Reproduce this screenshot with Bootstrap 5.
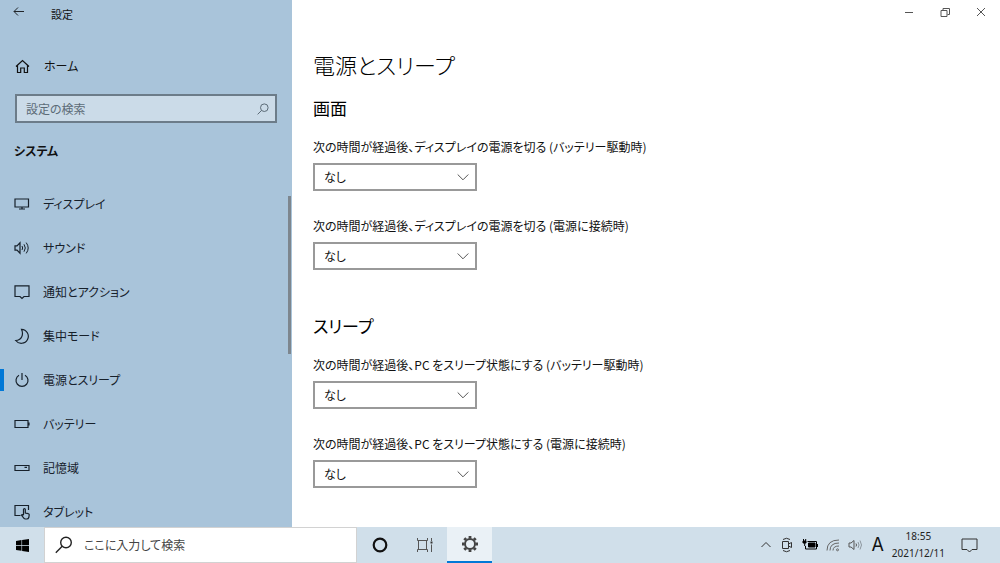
<!DOCTYPE html>
<html lang="ja">
<head>
<meta charset="utf-8">
<meta name="viewport" content="width=device-width, initial-scale=1">
<title>設定</title>
<link href="https://cdn.jsdelivr.net/npm/bootstrap@5.3.0/dist/css/bootstrap.min.css" rel="stylesheet">
<style>
  body { font-family: "Noto Sans CJK JP", sans-serif; font-feature-settings: "palt"; font-size: 12px; line-height: 20px; color: #111; background: #fff; }
  svg { display: block; flex: none; fill: none; stroke: currentColor; }
  a { color: inherit; }
  .sidebar { width: 292px; background: #a9c4da; }
  .titlebar { height: 28px; font-size: 11px; padding-left: 12px; gap: 26px; }
  .home-link { height: 36px; margin-top: 20px; padding-left: 15px; gap: 14px; }
  .find-box { margin: 10px 15px 0; height: 29px; border: 2px solid #6c7c89; background: #cbdbe8; color: #5c6b77; padding: 0 6px 0 9px; }
  .find-box input, .task-search input { border: 0; outline: 0; background: transparent; min-width: 0; padding: 0; font-feature-settings: inherit; }
  .find-box input::placeholder { color: #5c6b77; opacity: 1; }
  .group-title { font-size: 12px; line-height: 20px; margin: 18px 0 21px; padding-left: 14px; font-weight: 700; }
  .side-nav .nav-link { height: 44px; padding: 0 0 0 14px; gap: 13px; color: #16202a; font-size: 12px; }
  .side-nav .active::before { content: ""; position: absolute; left: 0; width: 4px; height: 22px; background: #0078d7; }
  .thumb { position: absolute; right: 1px; top: 196px; width: 3px; height: 158px; background: #7d868e; }
  .win-buttons { height: 24px; gap: 24px; padding-right: 13px; }
  .win-buttons .btn { color: #555; }
  .content-area { padding: 0 21px; }
  h1 { font-size: 22px; line-height: 36px; font-weight: 300; margin: 22px 0 12px; color: #000; }
  h2 { font-size: 17px; line-height: 28px; font-weight: 400; margin: 0 0 15px; color: #000; }
  .setting { margin-bottom: 25px; }
  .setting label { line-height: 20px; margin-bottom: 6px; }
  .group-gap { margin-top: 42px; }
  .setting .form-select { width: 164px; height: 28px; border: 2px solid #999; border-radius: 0; padding: 0 28px 0 9px; font-size: 12px; line-height: 20px; color: #111; font-feature-settings: inherit;
    background-image: url("data:image/svg+xml,%3Csvg xmlns='http://www.w3.org/2000/svg' viewBox='0 0 12 12'%3E%3Cpath d='M.7 3.5 6 8.8l5.300-5.300' fill='none' stroke='%23555'/%3E%3C/svg%3E"); background-size: 12px; background-position: right 6px center; }
  .taskbar { height: 36px; background: #d0dfea; color: #333; }
  .start { width: 44px; }
  .task-search { width: 313px; background: #fff; border: 1px solid #d2d2d2; padding-left: 10px; gap: 11px; color: #222; }
  .task-search input { font-size: 12px; }
  .task-search input::placeholder { color: #444; opacity: 1; }
  .task-btn { width: 45px; }
  .task-btn.current { background: #eaf1f6; border-bottom: 2px solid #0078d7 !important; }
  .tray { gap: 8px; padding-right: 22px; }
  .ime { font-family: Inter, sans-serif; font-size: 18px; line-height: 20px; color: #111; }
  .clock { font-family: "Noto Sans", sans-serif; font-size: 10px; line-height: 17px; color: #222; }
</style>
</head>
<body>
<div class="d-flex flex-column vh-100 overflow-hidden">
  <div class="d-flex flex-grow-1 overflow-hidden">
    <aside class="sidebar position-relative d-flex flex-column flex-shrink-0 overflow-hidden">
      <div class="titlebar d-flex align-items-center flex-shrink-0">
        <button class="btn p-0 border-0 pb-1" aria-label="戻る"><svg width="13" height="12" viewBox="0 0 13 12" stroke="#333"><path d="M2 5.500h10M6 1.500l-4 4 4 4"/></svg></button>
        <span>設定</span>
      </div>
      <a href="#" class="home-link d-flex align-items-center flex-shrink-0 text-decoration-none">
        <svg width="15" height="15" viewBox="0 0 15 15" stroke-width="1.200"><path d="M1 7.500 7.500 1.500 14 7.500M2.500 6.300v7.200h3.200V9h3.600v4.500h3.200V6.300"/></svg>
        <span>ホーム</span>
      </a>
      <div class="find-box d-flex align-items-center flex-shrink-0">
        <input type="text" class="flex-grow-1" placeholder="設定の検索" aria-label="設定の検索">
        <svg width="12" height="12" viewBox="0 0 12 12"><circle cx="7.300" cy="4.700" r="3.800"/><path d="M4.600 7.400.6 11.400"/></svg>
      </div>
      <p class="group-title">システム</p>
      <nav class="side-nav nav flex-column flex-nowrap">
        <a href="#" class="nav-link d-flex align-items-center"><svg width="16" height="16" viewBox="0 0 16 16" stroke-width="1.200"><path d="M1 3h13.500v8H1zM5 13h6M8 11v2"/></svg>ディスプレイ</a>
        <a href="#" class="nav-link d-flex align-items-center"><svg width="16" height="16" viewBox="0 0 16 16"><path stroke-width="1.200" d="M1 5.800h2L6 2.800v10.400L3 10.200H1z"/><path d="M8 6q1.300 2 0 4M10 4.300q2.600 3.700 0 7.400M12.200 2.600q4 5.400 0 10.800"/></svg>サウンド</a>
        <a href="#" class="nav-link d-flex align-items-center"><svg width="16" height="16" viewBox="0 0 16 16" stroke-width="1.200"><path d="M1 1.800h14v10.700h-5l-2 2-2-2H1z"/></svg>通知とアクション</a>
        <a href="#" class="nav-link d-flex align-items-center"><svg width="16" height="16" viewBox="0 0 16 16" stroke-width="1.200"><path d="M7.500 1.300a7 7 0 1 1-5.800 11.200C7.300 12.300 10 7 7.500 1.300z"/></svg>集中モード</a>
        <a href="#" class="nav-link active position-relative d-flex align-items-center" aria-current="page"><svg width="16" height="16" viewBox="0 0 16 16" stroke-width="1.200"><path d="M8 1v7M5 3.200a6 6 0 1 0 6 0"/></svg>電源とスリープ</a>
        <a href="#" class="nav-link d-flex align-items-center"><svg width="16" height="16" viewBox="0 0 16 16" stroke-width="1.200"><path d="M1 4.500h13v7H1zM15 6.500v3"/></svg>バッテリー</a>
        <a href="#" class="nav-link d-flex align-items-center"><svg width="16" height="16" viewBox="0 0 16 16" stroke-width="1.200"><path d="M1 5.500h14v5H1zM10.500 7.400H13"/></svg>記憶域</a>
        <a href="#" class="nav-link d-flex align-items-center"><svg width="16" height="16" viewBox="0 0 16 16" stroke-width="1.200"><path d="M6.500 11.500H1V1.500h13.500V6"/><path d="M9.500 11V5.500q0-1 .9-1t.9 1V9l3 .7q1 .3.900 1.300l-.4 2.500q-.5 1.500-2 1.500h-1.400q-1 0-1.600-.8L7.400 11q.8-1 2.100.3"/></svg>タブレット</a>
      </nav>
      <div class="thumb"></div>
    </aside>
    <div class="flex-grow-1">
      <div class="win-buttons d-flex justify-content-end align-items-center">
        <button class="btn p-0 border-0" aria-label="最小化"><svg width="12" height="12" viewBox="0 0 12 12"><path d="M2 6.500h8"/></svg></button>
        <button class="btn p-0 border-0" aria-label="元に戻す"><svg width="12" height="12" viewBox="0 0 12 12"><path d="M2 4.500h6v6H2zM4 4V2.500h6.500V8.500H8.500"/></svg></button>
        <button class="btn p-0 border-0" aria-label="閉じる"><svg width="12" height="12" viewBox="0 0 12 12"><path d="m2 2 8 8M10 2l-8 8"/></svg></button>
      </div>
      <main class="content-area">
        <h1>電源とスリープ</h1>
        <section>
          <h2>画面</h2>
          <div class="setting"><label class="d-block" for="screen-battery">次の時間が経過後、ディスプレイの電源を切る (バッテリー駆動時)</label>
            <select class="form-select" id="screen-battery"><option>なし</option></select></div>
          <div class="setting"><label class="d-block" for="screen-ac">次の時間が経過後、ディスプレイの電源を切る (電源に接続時)</label>
            <select class="form-select" id="screen-ac"><option>なし</option></select></div>
        </section>
        <section class="group-gap">
          <h2>スリープ</h2>
          <div class="setting"><label class="d-block" for="sleep-battery">次の時間が経過後、PC をスリープ状態にする (バッテリー駆動時)</label>
            <select class="form-select" id="sleep-battery"><option>なし</option></select></div>
          <div class="setting"><label class="d-block" for="sleep-ac">次の時間が経過後、PC をスリープ状態にする (電源に接続時)</label>
            <select class="form-select" id="sleep-ac"><option>なし</option></select></div>
        </section>
      </main>
    </div>
  </div>
  <footer class="taskbar d-flex align-items-stretch flex-shrink-0">
    <button class="start btn border-0 rounded-0 p-0 d-flex align-items-center justify-content-center" aria-label="スタート"><svg width="13" height="13" viewBox="0 0 13 13"><path fill="#000" stroke="none" d="M0 1.900 5.500 1.100V6H0zM6.100 1 13 0v6H6.100zM0 6.700h5.500v5.100L0 11zM6.100 6.700H13V13l-6.900-1z"/></svg></button>
    <div class="task-search d-flex align-items-center">
      <svg width="18" height="18" viewBox="0 0 18 18" stroke-width="1.400"><circle cx="11" cy="6.500" r="5.300"/><path d="M7.200 10.300.8 16.700"/></svg>
      <input type="text" class="flex-grow-1" placeholder="ここに入力して検索" aria-label="ここに入力して検索">
    </div>
    <button class="task-btn btn border-0 rounded-0 p-0 d-flex align-items-center justify-content-center" aria-label="Cortana"><svg width="16" height="16" viewBox="0 0 16 16"><circle cx="8" cy="8" r="6.300" stroke="#111" stroke-width="2.200"/></svg></button>
    <button class="task-btn btn border-0 rounded-0 p-0 d-flex align-items-center justify-content-center" aria-label="タスク ビュー"><svg width="16" height="16" viewBox="0 0 16 16"><path stroke="#555" d="M.5 1v2.500h10V1M.5 15v-2.500h10V15M1.500 3.500v9M9.500 3.500v9M14.500 1v3M14.500 7.500V15"/><path stroke="#333" stroke-width="2" d="M14.500 4.500v2"/></svg></button>
    <button class="task-btn current btn border-0 rounded-0 p-0 d-flex align-items-center justify-content-center" aria-label="設定"><svg width="18" height="18" viewBox="0 0 18 18"><g stroke="#444"><circle cx="9" cy="9" r="5" stroke-width="2"/><path stroke-width="2.800" d="M9 1v2.500M9 14.500V17M1 9h2.500M14.500 9H17M3.300 3.300l1.800 1.800M12.900 12.900l1.800 1.800M3.300 14.700l1.800-1.800M12.900 5.100l1.800-1.800"/></g></svg></button>
    <div class="tray d-flex align-items-center ms-auto">
      <svg width="12" height="12" viewBox="0 0 12 12"><path d="M1.500 8 6 3.500 10.500 8"/></svg>
      <svg width="14" height="16" viewBox="0 0 14 16"><path d="M2.500 4.500h6v7h-6zM8.500 7l3-1.500v5L8.500 9M3 2.500q3.500-2.500 7 0M3 13.500q3.500 2.500 7 0"/></svg>
      <svg width="16" height="14" viewBox="0 0 16 14"><g stroke="#000"><path fill="#000" d="M6.500 5H13v4H6.500z"/><path d="M5.500 3.500h9v7.500h-11V8M15.500 6v3"/><path fill="#000" d="M1 3h3v2H1zM1.500 1v2M3.700 1v2M2.700 5v3"/></g></svg>
      <svg width="14" height="14" viewBox="0 0 14 14"><g stroke="#666"><path d="M1 12.500Q1 2 13 2M4 12.500Q4 5 13 5M7 12.500Q7 8 13 8"/><circle cx="11.500" cy="11.800" r="1"/></g></svg>
      <svg width="15" height="14" viewBox="0 0 15 14"><path stroke="#555" d="M1 5h2l3-2.500v9L3 9H1zM8 5.500q1 1.500 0 3"/><path stroke="#8c969e" d="M10 4q2 3 0 6M12 2.500q3 4.500 0 9"/></svg>
      <span class="ime">A</span>
      <div class="clock text-center"><div>18:55</div><div>2021/12/11</div></div>
      <svg class="ms-2" width="17" height="17" viewBox="0 0 17 17"><path d="M1 2h15v10.500h-5l-2.500 2.500L6 12.500H1z"/></svg>
    </div>
  </footer>
</div>
<script src="https://cdn.jsdelivr.net/npm/bootstrap@5.3.0/dist/js/bootstrap.bundle.min.js"></script>
</body>
</html>
